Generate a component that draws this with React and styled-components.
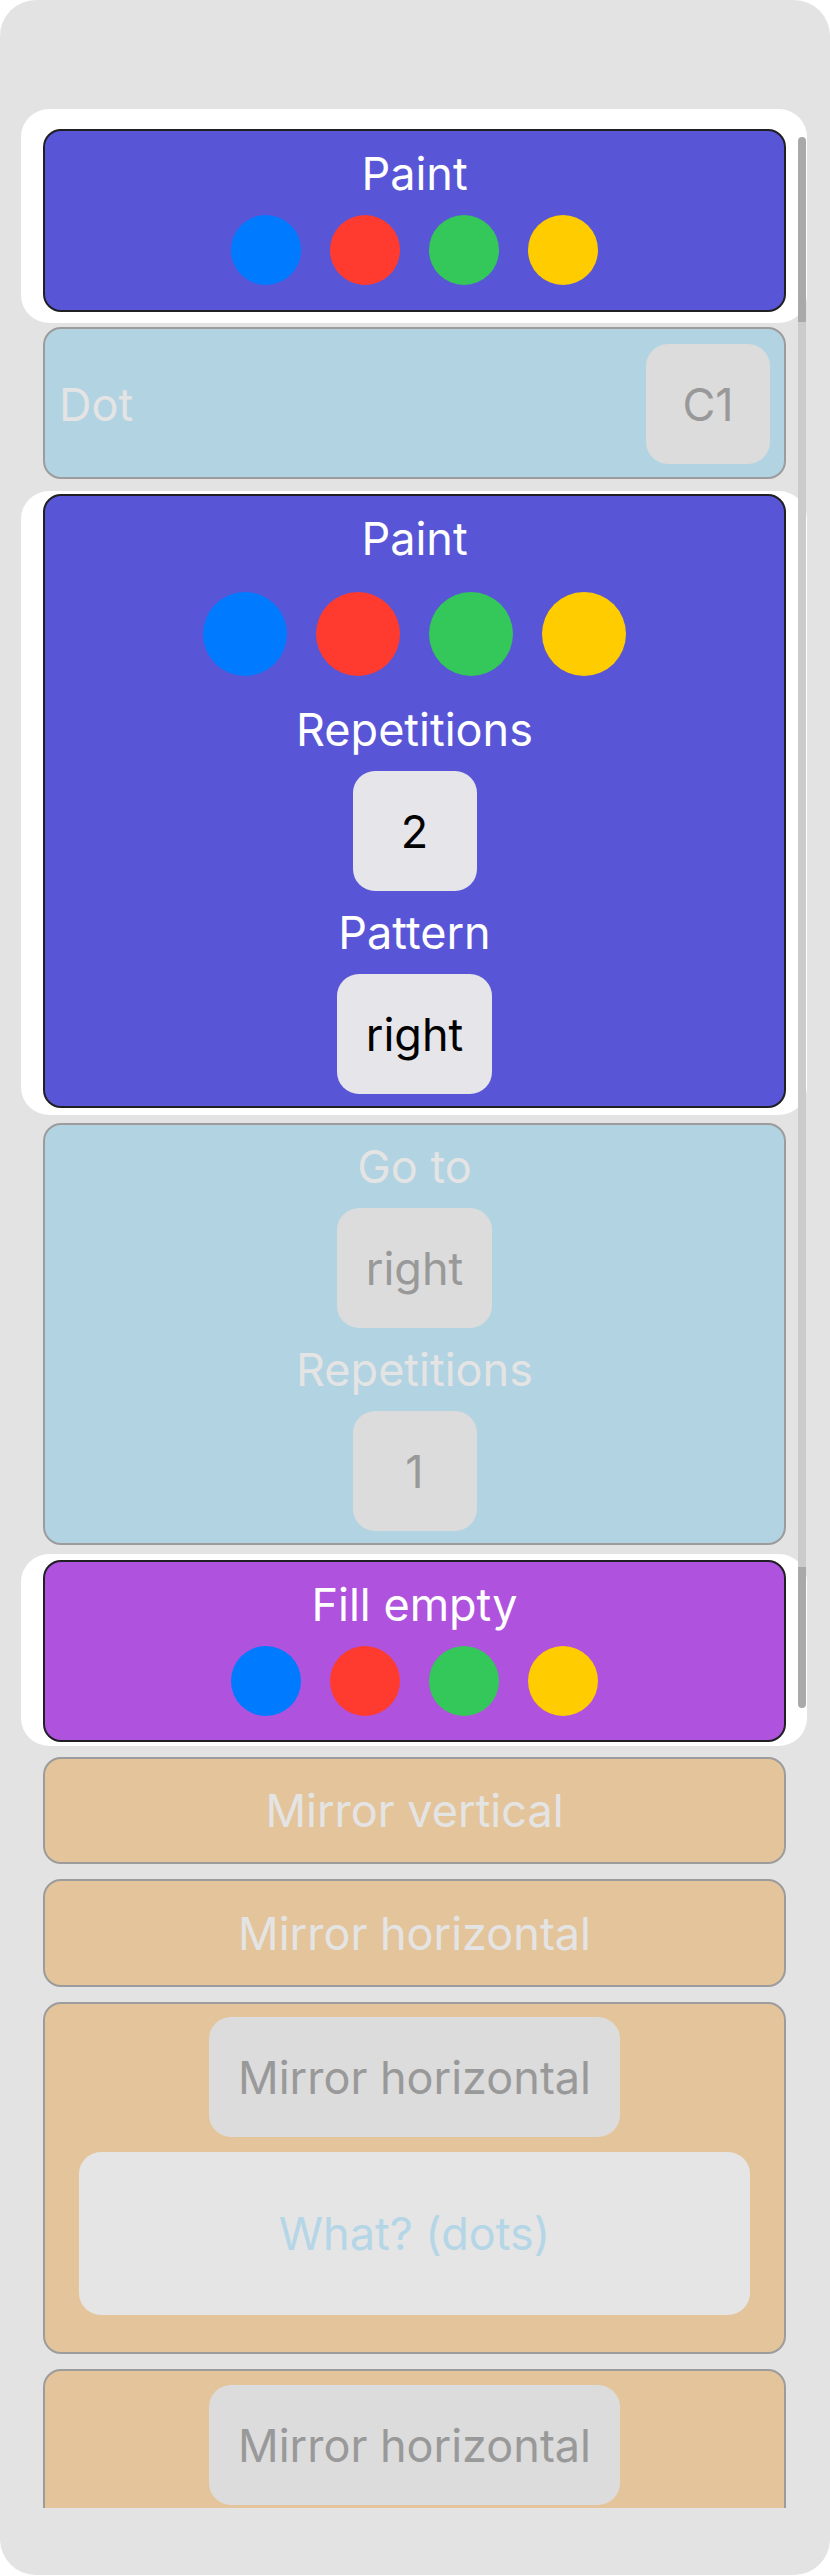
import React from 'react';
import styled, { createGlobalStyle } from 'styled-components';

const GlobalStyle = createGlobalStyle`
html, body {
  margin: 0;
  padding: 0;
  background: #ffffff;
}
body {
  font-family: Inter, "Noto Sans", sans-serif;
}
`

const Screen = styled.div`
box-sizing: border-box;
width: 830px;
height: 2575px;
padding-top: 100px;
background: #e3e3e3;
border-radius: 36px;
overflow: hidden;
`

const List = styled.div`
position: relative;
box-sizing: border-box;
height: 2408px;
overflow: hidden;
padding: 29px 44px 0 43px;
display: flex;
flex-direction: column;
gap: 15px;
`

const ScrollIndicator = styled.div`
position: absolute;
top: 37px;
right: 24px;
width: 8px;
height: 1571px;
border-radius: 4px;
background: linear-gradient(to bottom, #a9a9a9 0 185px, #cbcbcb 185px 1430px, #a9a9a9 1430px);
z-index: 2;
`

const Highlight = styled.div`
background: #ffffff;
border-radius: 28px;
padding: ${({$top}) => $top}px 21px ${({$bottom}) => $bottom}px 22px;
margin: -${({$top}) => $top}px -21px -${({$bottom}) => $bottom}px -22px;
`

const palette = {
  paint: { bg: '#5856d6', border: '#1f1f24' },
  fill: { bg: '#af52de', border: '#1f1f24' },
  move: { bg: '#b2d3e2', border: '#9c9c9c' },
  mirror: { bg: '#e4c59b', border: '#9c9c9c' },
}

const Card = styled.div`
box-sizing: border-box;
display: flex;
flex-direction: column;
align-items: center;
flex-shrink: 0;
background: ${({$kind}) => palette[$kind].bg};
border: 2px solid ${({$kind}) => palette[$kind].border};
border-radius: 18px;
padding: ${({$pad}) => $pad || '15px 14px 12px'};
gap: 15px;
`

const InlineCard = styled(Card)`
flex-direction: row;
justify-content: space-between;
padding: 15px 14px 13px 14px;
`

const Label = styled.div`
font-size: 45px;
line-height: 53px;
font-weight: 400;
color: ${({$muted}) => $muted ? '#e4e4e4' : '#ffffff'};
white-space: nowrap;
`

const Swatches = styled.div`
display: flex;
gap: 29px;
margin: ${({$large}) => $large ? '12px 0' : '0 0 12px'};
`

const Swatch = styled.span`
display: block;
width: ${({$size}) => $size}px;
height: ${({$size}) => $size}px;
border-radius: 50%;
background: ${({$color}) => $color};
`

const ValueButton = styled.div`
box-sizing: border-box;
display: flex;
align-items: center;
justify-content: center;
flex-shrink: 0;
min-width: 124px;
height: 120px;
padding: 0 29px;
border-radius: 22px;
font-size: 45px;
line-height: 53px;
white-space: nowrap;
background: ${({$muted}) => $muted ? '#dcdcdc' : '#e5e5ea'};
color: ${({$muted}) => $muted ? '#999999' : '#000000'};
`

const DropZone = styled.div`
box-sizing: border-box;
align-self: stretch;
height: 163px;
margin: 0 20px 22px;
display: flex;
align-items: center;
justify-content: center;
border-radius: 22px;
background: #e5e5e5;
font-size: 45px;
line-height: 53px;
color: #b4d6e6;
`

const colors = ['#007aff', '#ff3b30', '#34c759', '#ffcc00']

function ColorRow({ large }) {
  return <Swatches $large={large}>
    {colors.map(c => <Swatch key={c} $color={c} $size={large ? 84 : 70} />)}
  </Swatches>
}

export default function App() {
  return <>
    <GlobalStyle />
    <Screen>
      <List>
        <ScrollIndicator />
        <Highlight $top={20} $bottom={11}>
          <Card $kind="paint" $pad="16px 14px 13px">
            <Label>Paint</Label>
            <ColorRow />
          </Card>
        </Highlight>

        <InlineCard $kind="move">
          <Label $muted>Dot</Label>
          <ValueButton $muted>C1</ValueButton>
        </InlineCard>

        <Highlight $top={3} $bottom={7}>
          <Card $kind="paint" $pad="16px 14px 12px">
            <Label>Paint</Label>
            <ColorRow large />
            <Label>Repetitions</Label>
            <ValueButton>2</ValueButton>
            <Label>Pattern</Label>
            <ValueButton>right</ValueButton>
          </Card>
        </Highlight>

        <Card $kind="move">
          <Label $muted>Go to</Label>
          <ValueButton $muted>right</ValueButton>
          <Label $muted>Repetitions</Label>
          <ValueButton $muted>1</ValueButton>
        </Card>

        <Highlight $top={6} $bottom={4}>
          <Card $kind="fill" $pad="16px 14px 12px">
            <Label>Fill empty</Label>
            <ColorRow />
          </Card>
        </Highlight>

        <Card $kind="mirror" $pad="25px 14px">
          <Label $muted>Mirror vertical</Label>
        </Card>

        <Card $kind="mirror" $pad="26px 14px 25px">
          <Label $muted>Mirror horizontal</Label>
        </Card>

        <Card $kind="mirror" $pad="13px 14px 15px">
          <ValueButton $muted>Mirror horizontal</ValueButton>
          <DropZone>What? (dots)</DropZone>
        </Card>

        <Card $kind="mirror" $pad="14px 14px 60px">
          <ValueButton $muted>Mirror horizontal</ValueButton>
        </Card>
      </List>
    </Screen>
  </>
}
